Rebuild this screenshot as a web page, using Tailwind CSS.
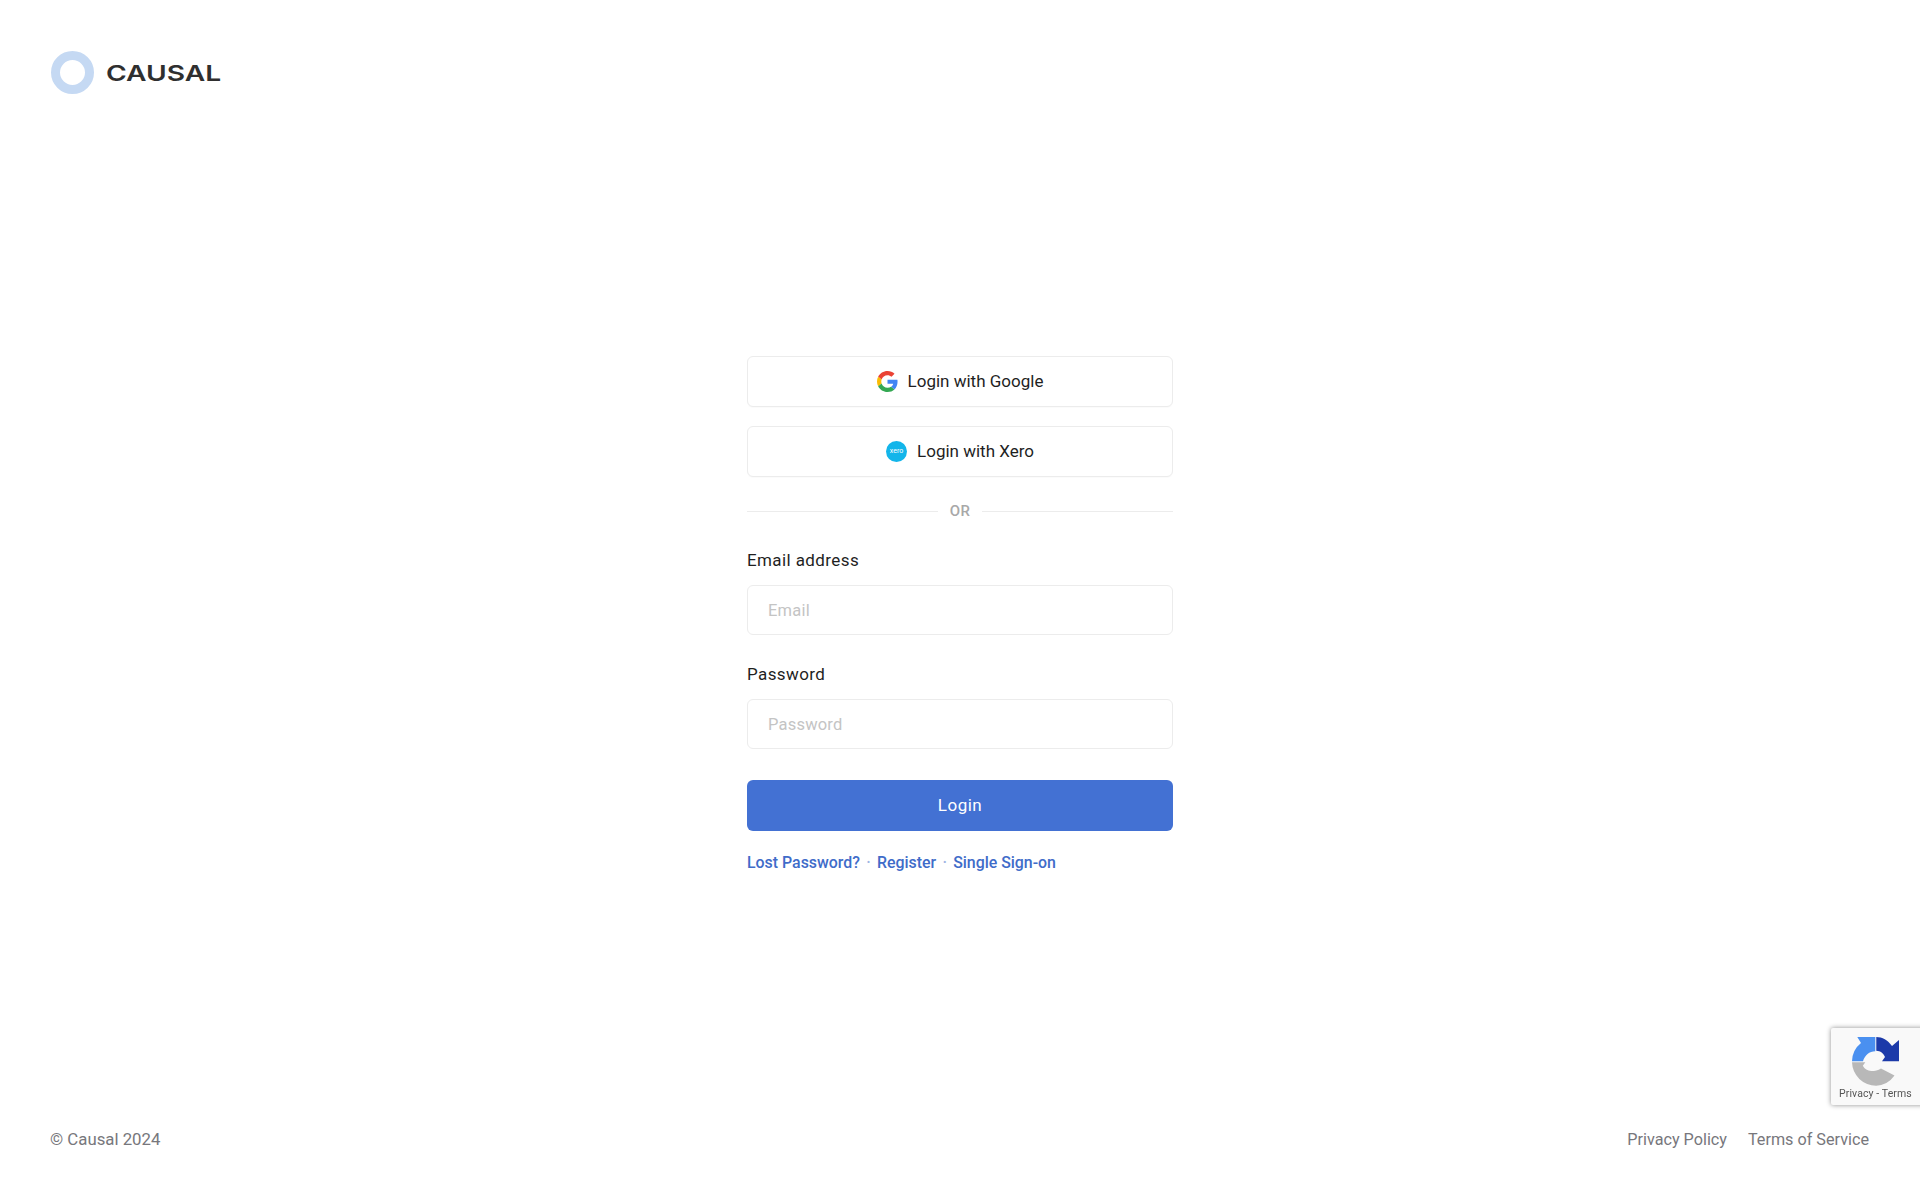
<!DOCTYPE html>
<html lang="en">
<head>
    <meta charset="UTF-8">
    <meta name="viewport" content="width=device-width, initial-scale=1.0">
    <title>Causal - Login</title>
    <script src="https://cdn.jsdelivr.net/npm/@tailwindcss/browser@4"></script>
</head>
<body class="bg-white h-[1200px] overflow-hidden flex flex-col font-['Roboto',sans-serif] text-[17px] text-[#1f1f1f]">
    <!-- Header -->
    <header class="flex items-center gap-[12px] pl-[51px] pt-[51px] h-[94px]">
        <div class="w-[43px] h-[43px] rounded-full border-[9px] border-[#c5d9f3]"></div>
        <span class="font-['Inter',sans-serif] font-semibold text-[22px] leading-none text-[#2f2f2f] origin-left scale-x-[1.28]">CAUSAL</span>
    </header>

    <!-- Login form -->
    <main class="w-[426px] mx-auto mt-[262px]">
        <button type="button" class="w-full h-[51px] flex items-center justify-center gap-[10px] bg-white border border-[#ececec] rounded-[6px] shadow-[0_1px_1px_rgba(0,0,0,0.02)]">
            <svg class="w-[21px] h-[21px]" viewBox="0 0 48 48">
                <path fill="#EA4335" d="M24 9.5c3.54 0 6.71 1.22 9.21 3.6l6.85-6.85C35.9 2.38 30.47 0 24 0 14.62 0 6.51 5.38 2.56 13.22l7.98 6.19C12.43 13.72 17.74 9.5 24 9.5z"/>
                <path fill="#4285F4" d="M46.98 24.55c0-1.57-.15-3.09-.38-4.55H24v9.02h12.94c-.58 2.96-2.26 5.48-4.78 7.18l7.73 6c4.51-4.18 7.09-10.36 7.09-17.65z"/>
                <path fill="#FBBC05" d="M10.53 28.59c-.48-1.45-.76-2.99-.76-4.59s.27-3.14.76-4.59l-7.98-6.19C.92 16.46 0 20.12 0 24c0 3.88.92 7.54 2.56 10.78l7.97-6.19z"/>
                <path fill="#34A853" d="M24 48c6.48 0 11.93-2.13 15.89-5.81l-7.73-6c-2.15 1.45-4.92 2.3-8.16 2.3-6.26 0-11.57-4.22-13.47-9.91l-7.98 6.19C6.51 42.62 14.62 48 24 48z"/>
            </svg>
            Login with Google
        </button>
        <button type="button" class="w-full h-[51px] mt-[19px] flex items-center justify-center gap-[10px] bg-white border border-[#ececec] rounded-[6px] shadow-[0_1px_1px_rgba(0,0,0,0.02)]">
            <span class="w-[21px] h-[21px] rounded-full bg-[#13b5ea] flex items-center justify-center text-white text-[7px] leading-none">xero</span>
            Login with Xero
        </button>

        <div class="flex items-center gap-[12px] mt-[24px] h-[20px] text-[15px] font-medium tracking-[0.3px] text-[#a8a8a8]">
            <div class="flex-1 h-px bg-[#ececec]"></div>
            OR
            <div class="flex-1 h-px bg-[#ececec]"></div>
        </div>

        <label class="block mt-[29px] leading-[20px] tracking-[0.4px]">Email address</label>
        <input type="text" placeholder="Email" class="block w-full h-[50px] mt-[15px] px-[20px] bg-white border border-[#ececec] rounded-[6px] text-[16.5px] tracking-[0.2px] placeholder:text-[#c4c4c4]">

        <label class="block mt-[29px] leading-[20px] tracking-[0.4px]">Password</label>
        <input type="password" placeholder="Password" class="block w-full h-[50px] mt-[15px] px-[20px] bg-white border border-[#ececec] rounded-[6px] text-[16.5px] tracking-[0.2px] placeholder:text-[#c4c4c4]">

        <button type="button" class="w-full h-[51px] mt-[31px] bg-[#4371d3] text-white rounded-[6px] tracking-[0.5px]">Login</button>

        <div class="flex items-center mt-[22px] h-[20px] text-[15.9px] font-medium text-[#3f6cc9]">
            <a href="#">Lost Password?</a>
            <span class="w-[17px] text-center text-[#9db4e3]">·</span>
            <a href="#">Register</a>
            <span class="w-[17px] text-center text-[#9db4e3]">·</span>
            <a href="#">Single Sign-on</a>
        </div>
    </main>

    <!-- Footer -->
    <footer class="mt-auto flex justify-between pl-[50px] pr-[51px] pb-[50px] h-[70px] text-[16.2px] leading-[20px] text-[#77777c]">
        <span class="text-[16.8px] -mt-px">© Causal 2024</span>
        <div class="flex gap-[21px]">
            <a href="#">Privacy Policy</a>
            <a href="#">Terms of Service</a>
        </div>
    </footer>

    <!-- reCAPTCHA badge -->
    <div class="fixed left-[1831px] top-[1028px] w-[100px] h-[77px] bg-[#f9f9f9] rounded-l-[2px] shadow-[0_0_5px_rgba(0,0,0,0.45)]">
        <svg class="absolute left-[21px] top-[9px] w-[48px] h-[49px]" viewBox="0 0 48 49">
            <path fill="#b8b8b8" d="M0 25.300h13.300l-2.500 3.500c1.800 3.200 4.700 5.200 8.500 5.200 3.700 0 6.700-.6 9.700-2.500l13.500 7A24 24 0 0 1 24.300 48.700 24 24 0 0 1 0 25.300z"/>
            <path fill="#4a90f0" d="M0 24.300A24 24 0 0 1 9 6L5.300 0h18v14.300c-6 0-10.500 4-12.300 10z"/>
            <path fill="#1c3aa9" d="M24.300 0c6 0 11.500 3 15.700 9l7-6v21.300H30l3-4.300c-1.500-3.500-4.500-6.300-8.700-6.300z"/>
        </svg>
        <div class="absolute left-[8px] top-[60px] whitespace-nowrap text-[10.5px] leading-[12px] text-[#555555] tracking-[0.1px]">Privacy - Terms</div>
    </div>
</body>
</html>
